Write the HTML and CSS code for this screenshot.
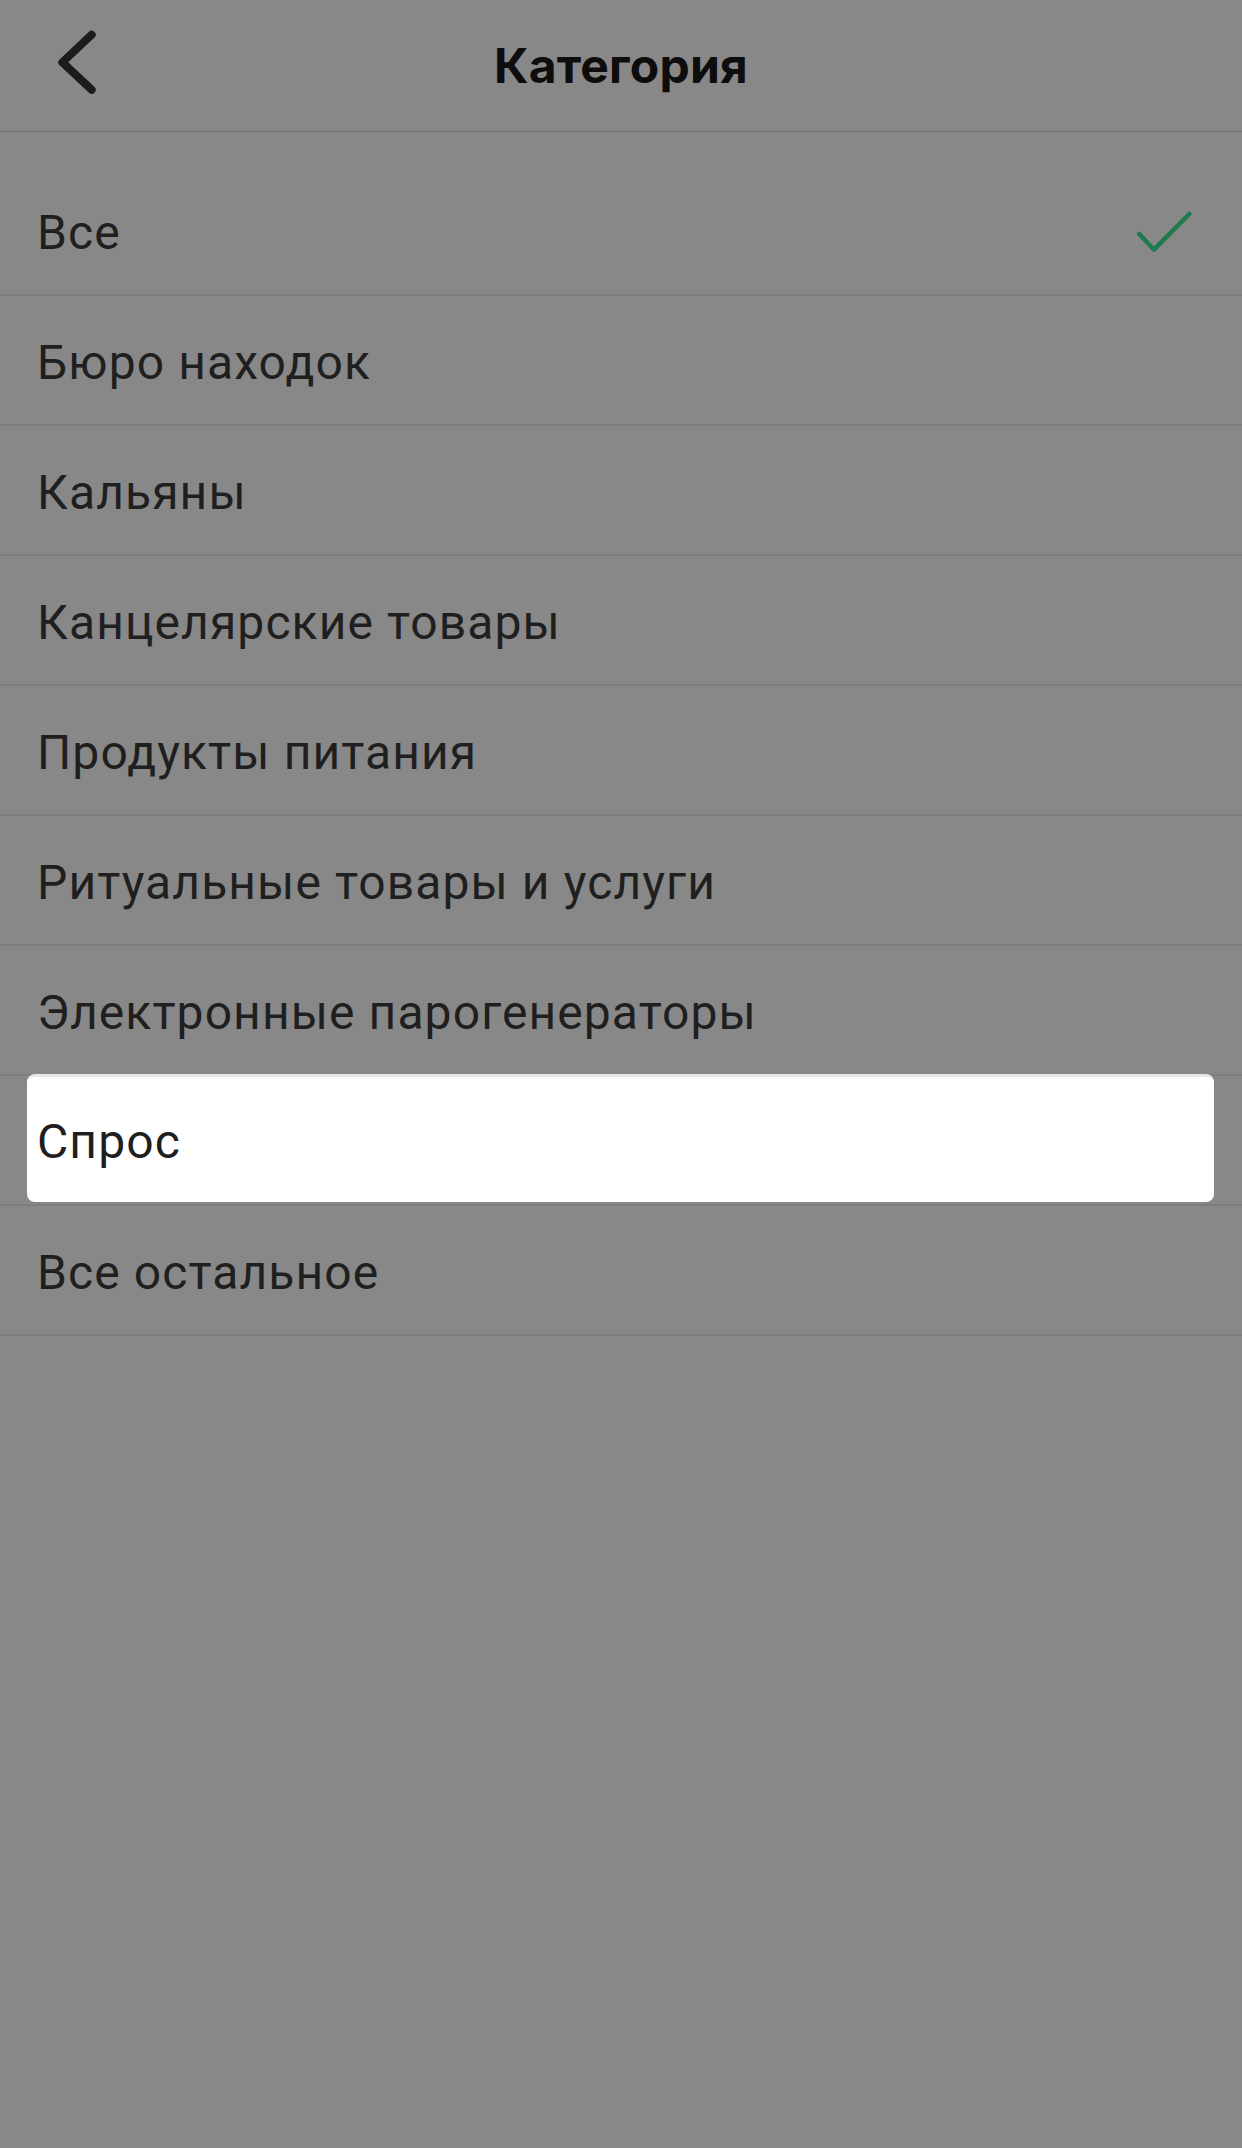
FILE: index.html
```html
<!DOCTYPE html>
<html lang="ru">
<head>
    <meta charset="UTF-8">
    <meta name="viewport" content="width=device-width, initial-scale=1.0">
    <title>Категория</title>
    <link rel="stylesheet" href="styles.css">
</head>
<body>
    <div class="header">
        <button class="back" aria-label="Назад">
            <svg width="52" height="80" viewBox="0 0 52 80">
                <polyline points="41.7,10.7 12.3,38.3 41.7,65.7" fill="none" stroke="#1c1c1c" stroke-width="8" stroke-linecap="round" stroke-linejoin="round"/>
            </svg>
        </button>
        <div class="title">Категория</div>
        <div></div>
    </div>

    <div class="list">
        <div class="row selected">
            <span class="label">Все</span>
            <svg class="check" width="56" height="44" viewBox="0 0 56 44">
                <polyline points="3.3,24 18,39.7 53.3,4" fill="none" stroke="#1f7a4e" stroke-width="4.5" stroke-linecap="round" stroke-linejoin="round"/>
            </svg>
        </div>
        <div class="row"><span class="label">Бюро находок</span></div>
        <div class="row"><span class="label">Кальяны</span></div>
        <div class="row"><span class="label">Канцелярские товары</span></div>
        <div class="row"><span class="label">Продукты питания</span></div>
        <div class="row"><span class="label">Ритуальные товары и услуги</span></div>
        <div class="row"><span class="label">Электронные парогенераторы</span></div>
        <div class="row pressed">
            <div class="press-card"><span class="label">Спрос</span></div>
        </div>
        <div class="row"><span class="label">Все остальное</span></div>
    </div>
</body>
</html>
```

FILE: styles.css
```css
body {
    margin: 0;
    padding: 0;
    background-color: #888888;
    font-family: Roboto, "Noto Sans", sans-serif;
    color: #1f1f1f;
    min-height: 2148px;
}
.header {
    display: grid;
    grid-template-columns: 1fr auto 1fr;
    align-items: center;
    height: 131px;
    border-bottom: 1px solid #6c6c6c;
}
.back {
    background: none;
    border: none;
    padding: 0;
    margin-left: 50px;
    width: 52px;
    height: 80px;
    margin-top: -4px;
    cursor: pointer;
}
.back svg {
    display: block;
}
.title {
    font-family: Inter, "Noto Sans", sans-serif;
    font-weight: 700;
    font-size: 48px;
    color: #0d0d0d;
    letter-spacing: 0.2px;
}
.list {
    padding-top: 34px;
}
.row {
    display: flex;
    align-items: center;
    justify-content: space-between;
    height: 128px;
    padding: 0 50px 0 37px;
    border-bottom: 2px solid #7e7e7e;
}
.label {
    font-size: 48px;
    line-height: 1;
    letter-spacing: 1.1px;
    margin-top: 5px;
}
.check {
    display: block;
    margin-top: 4px;
}
.row.pressed {
    padding: 0 28px 0 27px;
}
.press-card {
    flex: 1;
    display: flex;
    align-items: center;
    box-sizing: border-box;
    height: 128px;
    margin-top: -4px;
    padding-left: 10px;
    background: #fff;
    border-top: 3px solid #e8e8e8;
    border-radius: 8px;
}
```
